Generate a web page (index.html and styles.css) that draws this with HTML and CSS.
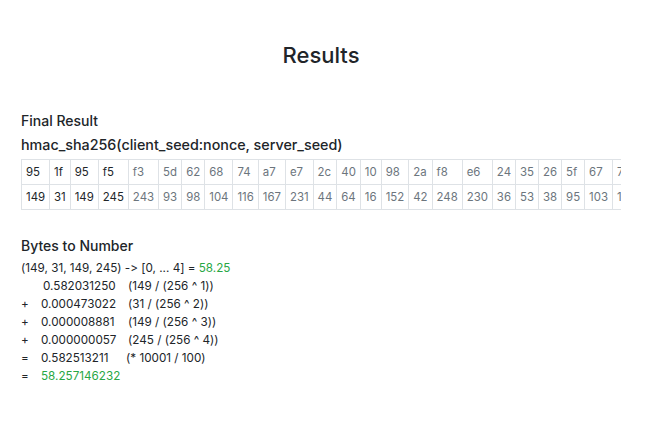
FILE: index.html
```html
<!DOCTYPE html>
<html>
<head>
<meta charset="utf-8">
<link rel="stylesheet" href="styles.css">
</head>
<body>
<main class="page">
  <h1 class="title">Results</h1>
  <section class="block">
    <h6 class="label">Final Result</h6>
    <h5 class="formula">hmac_sha256(client_seed:nonce, server_seed)</h5>
    <div class="table-wrap">
      <table class="bytes">
        <tr>
          <td class="used">95</td><td class="used">1f</td><td class="used">95</td><td class="used">f5</td>
          <td>f3</td><td>5d</td><td>62</td><td>68</td><td>74</td><td>a7</td><td>e7</td><td>2c</td><td>40</td><td>10</td><td>98</td><td>2a</td><td>f8</td><td>e6</td><td>24</td><td>35</td><td>26</td><td>5f</td><td>67</td><td>7c</td><td>3a</td><td>c1</td><td>0e</td><td>89</td><td>d4</td><td>4b</td><td>b2</td><td>19</td>
        </tr>
        <tr>
          <td class="used">149</td><td class="used">31</td><td class="used">149</td><td class="used">245</td>
          <td>243</td><td>93</td><td>98</td><td>104</td><td>116</td><td>167</td><td>231</td><td>44</td><td>64</td><td>16</td><td>152</td><td>42</td><td>248</td><td>230</td><td>36</td><td>53</td><td>38</td><td>95</td><td>103</td><td>124</td><td>58</td><td>193</td><td>14</td><td>137</td><td>212</td><td>75</td><td>178</td><td>25</td>
        </tr>
      </table>
    </div>
  </section>
  <section class="block">
    <h5 class="heading">Bytes to Number</h5>
    <div class="calc">
      <div class="line">(149, 31, 149, 245) -&gt; [0, ... 4] = <span class="ok">58.25</span></div>
      <div class="row"><span class="op"></span><span class="num first">0.582031250</span><span class="expr">(149 / (256 ^ 1))</span></div>
      <div class="row"><span class="op">+</span><span class="num">0.000473022</span><span class="expr">(31 / (256 ^ 2))</span></div>
      <div class="row"><span class="op">+</span><span class="num">0.000008881</span><span class="expr">(149 / (256 ^ 3))</span></div>
      <div class="row"><span class="op">+</span><span class="num">0.000000057</span><span class="expr">(245 / (256 ^ 4))</span></div>
      <div class="row"><span class="op">=</span><span class="num">0.582513211</span><span class="expr shift">(* 10001 / 100)</span></div>
      <div class="row"><span class="op">=</span><span class="num ok">58.257146232</span></div>
    </div>
  </section>
</main>
</body>
</html>
```

FILE: styles.css
```css
html, body {
  margin: 0;
  padding: 0;
  background: #fff;
}
body {
  font-family: "Inter", "Helvetica Neue", Arial, sans-serif;
  font-variant-ligatures: none;
  font-feature-settings: "calt" 0, "liga" 0;
  color: #212529;
}
.page {
  width: 600px;
  margin-left: 21px;
  padding-top: 42px;
}
.title {
  margin: 0;
  text-align: center;
  font-size: 22px;
  font-weight: 500;
  line-height: 1.2;
}
.block {
  display: flex;
  flex-direction: column;
}
.label {
  margin: 45px 0 0;
  font-size: 14px;
  font-weight: 500;
  line-height: 1.2;
}
.formula {
  margin: 6px 0 0;
  font-size: 14.3px;
  font-weight: 500;
  line-height: 1.2;
}
.table-wrap {
  margin-top: 6px;
  overflow: hidden;
}
.bytes {
  border-collapse: collapse;
  font-size: 11.4px;
  line-height: 16px;
  color: #6c757d;
}
.bytes td {
  border: 1px solid #dee2e6;
  padding: 4px;
  white-space: nowrap;
}
.bytes td.used {
  color: #212529;
}
.heading {
  margin: 28px 0 0;
  font-size: 14px;
  font-weight: 500;
  line-height: 1.2;
}
.calc {
  margin-top: 4px;
  font-size: 11.7px;
  line-height: 18px;
}
.row {
  display: grid;
  grid-template-columns: 20px 87px auto;
}
.num.first {
  padding-left: 2px;
}
.expr.shift {
  margin-left: -2px;
}
.ok {
  color: #28a745;
}
```
